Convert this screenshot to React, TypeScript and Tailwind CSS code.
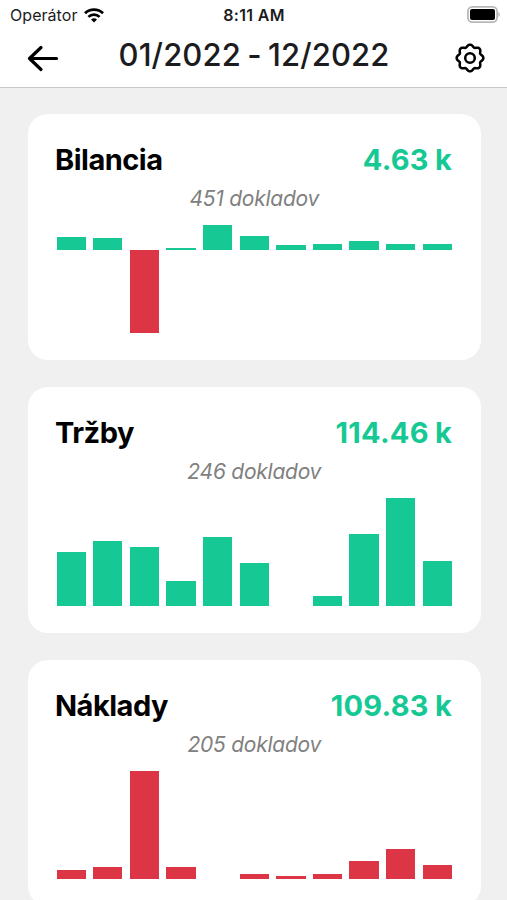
import React from 'react';

interface Report {
  title: string;
  total: string;
  count: string;
  baseline: number;
  bars: number[];
}

// bar heights in px, negative values are drawn red
const reports: Report[] = [
  {
    title: 'Bilancia',
    total: '4.63 k',
    count: '451 dokladov',
    baseline: 25,
    bars: [12.7, 12.3, -83.3, 2.3, 25, 14, 5, 6, 9, 6, 6],
  },
  {
    title: 'Tržby',
    total: '114.46 k',
    count: '246 dokladov',
    baseline: 108,
    bars: [54, 64.7, 59.3, 24.7, 69, 43, 0, 9.7, 72.3, 108, 44.7],
  },
  {
    title: 'Náklady',
    total: '109.83 k',
    count: '205 dokladov',
    baseline: 108,
    bars: [-9, -12, -108.3, -12, 0, -5, -2.7, -4.7, -18, -30, -13.7],
  },
];

const gearPath =
  Array.from({ length: 96 }, (_, i) => {
    const a = (i / 96) * Math.PI * 2;
    const r = 12.3 + 1.15 * Math.cos(8 * a) - 0.1 * Math.cos(16 * a);
    return `${i ? 'L' : 'M'}${(15 + r * Math.sin(a)).toFixed(2)} ${(15 - r * Math.cos(a)).toFixed(2)}`;
  }).join('') + 'Z';

function StatusBar() {
  return (
    <div className="grid h-[30px] grid-cols-3 items-center pl-2.5 pr-[7px] text-[#1c1c1c]">
      <div className="flex items-center gap-[7px]">
        <span className="text-[16px] tracking-[0.05px]">Operátor</span>
        <svg className="h-[15px] w-5" viewBox="0 0 20 15" fill="none" stroke="#000" strokeWidth="2.7">
          <path d="M1 5.3a12.8 12.8 0 0 1 18 0" />
          <path d="M4.4 8.9a8 8 0 0 1 11.2 0" />
          <path d="M10 14.6 7 11.6a4.3 4.3 0 0 1 6 0Z" fill="#000" stroke="none" />
        </svg>
      </div>
      <span className="-ml-0.5 text-center text-[16px] font-semibold tracking-[0.3px]">8:11 AM</span>
      <svg className="-mt-0.5 h-[17px] w-[33px] justify-self-end" viewBox="0 0 33 17">
        <rect x="0.9" y="0.9" width="29.2" height="15.2" rx="4.5" fill="#fff" stroke="#b8b8b8" strokeWidth="1.8" />
        <rect x="3" y="3" width="25" height="11" rx="2" fill="#000" />
        <path d="M31.4 6v5c2-1 2-4 0-5Z" fill="#b8b8b8" />
      </svg>
    </div>
  );
}

function Chart({ bars, baseline }: { bars: number[]; baseline: number }) {
  return (
    <div className="flex gap-[7.25px]">
      {bars.map((value, i) => (
        <div key={i} className="flex-1" style={{ paddingTop: value > 0 || baseline > 100 ? baseline - Math.abs(value) : baseline }}>
          <div className={value > 0 ? 'bg-[#16c994]' : 'bg-[#dc3545]'} style={{ height: Math.abs(value) }} />
        </div>
      ))}
    </div>
  );
}

function ReportCard({ title, total, count, bars, baseline }: Report) {
  return (
    <section className="h-[245.7px] shrink-0 rounded-[20px] bg-white px-[28.5px] pt-[27px]">
      <div className="-ml-[1.5px] flex h-[37px] items-center justify-between text-[29px] font-[650]">
        <h2 className="tracking-[-0.5px] text-black">{title}</h2>
        <span className="tracking-[0.25px] [word-spacing:-1px] text-[#16c994]">{total}</span>
      </div>
      <p className="mb-[7px] mt-1 h-9 pt-0.5 text-center text-[21px] leading-[30px] tracking-[-0.25px] italic text-[#808080]">{count}</p>
      <Chart bars={bars} baseline={baseline} />
    </section>
  );
}

export default function App() {
  return (
    <div className="flex h-[900px] w-[507px] flex-col overflow-hidden bg-[#f0f0f0] font-['Inter',sans-serif]">
      <header className="h-[88px] shrink-0 border-b border-[#c8c8c8] bg-white">
        <StatusBar />
        <div className="flex h-[50px] items-center justify-between pl-[27px] pr-[22px]">
          <svg className="mt-1.5 h-[27px] w-8" viewBox="0 0 32 27" fill="none" stroke="#000" strokeWidth="3.2" strokeLinecap="round" strokeLinejoin="round">
            <path d="M29.5 13.5H2.5M14 2.5l-11.5 11L14 24.5" />
          </svg>
          <h1 className="-ml-1.5 text-[31px] font-[450] tracking-[0.1px] [word-spacing:-2px] text-[#1c1c1e]">01/2022 - 12/2022</h1>
          <svg className="mt-1.5 size-[30px]" viewBox="0 0 30 30" fill="none" stroke="#000" strokeWidth="2.5" strokeLinejoin="round">
            <path d={gearPath} />
            <circle cx="15" cy="15" r="4.8" />
          </svg>
        </div>
      </header>
      <main className="flex flex-col gap-[27.3px] pl-7 pr-[26.5px] pt-[26px]">
        {reports.map((report) => (
          <ReportCard key={report.title} {...report} />
        ))}
      </main>
    </div>
  );
}
